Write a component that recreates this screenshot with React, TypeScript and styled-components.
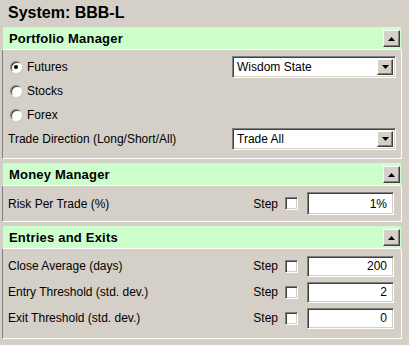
import React from 'react'
import styled, { createGlobalStyle } from 'styled-components'

const GlobalStyle = createGlobalStyle`
  html, body {
    margin: 0;
    padding: 0;
    background: #d4d0c8;
  }
  body {
    font-family: "Liberation Sans", Arial, sans-serif;
    font-size: 12px;
    color: #000;
  }
`

const Page = styled.div`
  width: 409px;
  height: 345px;
  overflow: hidden;
  background: #d4d0c8;
`

const Title = styled.div`
  height: 27px;
  line-height: 26px;
  padding-left: 8px;
  font-size: 16px;
  font-weight: bold;
`

const Panel = styled.section`
  width: 400px;
  margin: 0 0 4px 2px;
`

const Header = styled.div`
  box-sizing: border-box;
  height: 23px;
  margin-left: 1px;
  width: 398px;
  display: flex;
  align-items: center;
  justify-content: space-between;
  background: #ccffcc;
  border-bottom: 1px solid #fff;
  padding: 1px 1px 0 6px;
  font-size: 13px;
  font-weight: bold;
  letter-spacing: 0.2px;
`

const CollapseButton = styled.button`
  box-sizing: border-box;
  width: 17px;
  height: 17px;
  padding: 0;
  background: #d4d0c8;
  border: 1px solid;
  border-color: #fff #404040 #404040 #fff;
  box-shadow: inset -1px -1px 0 #808080;
  display: flex;
  align-items: center;
  justify-content: center;
`

const Body = styled.div<{ $top: number; $bottom: number }>`
  border-left: 1px solid #808080;
  border-right: 1px solid #fff;
  border-bottom: 1px solid #fff;
  padding: ${p => p.$top}px 5px ${p => p.$bottom}px 5px;
`

const Row = styled.div<{ $h: number }>`
  height: ${p => p.$h}px;
  display: flex;
  align-items: center;
  justify-content: space-between;
`

const RadioLabel = styled.label`
  display: flex;
  align-items: center;
  gap: 5px;
  padding-left: 2px;
`

const RadioCircle = styled.span<{ $on?: boolean }>`
  box-sizing: border-box;
  width: 12px;
  height: 12px;
  border-radius: 50%;
  border: 1px solid;
  border-color: #808080 #fff #fff #808080;
  background: #fff;
  box-shadow: inset 1px 1px 0 #404040;
  display: flex;
  align-items: center;
  justify-content: center;
  &::after {
    content: '';
    width: 4px;
    height: 4px;
    border-radius: 50%;
    background: ${p => (p.$on ? '#000' : 'transparent')};
  }
`

const Select = styled.div`
  box-sizing: border-box;
  width: 164px;
  height: 22px;
  display: flex;
  align-items: center;
  justify-content: space-between;
  background: #fff;
  border: 1px solid;
  border-color: #808080 #fff #fff #808080;
  box-shadow: inset 1px 1px 0 #404040, inset -1px -1px 0 #d4d0c8;
  padding: 2px 2px 2px 4px;
  font-size: 12px;
`

const DropButton = styled.span`
  box-sizing: border-box;
  width: 16px;
  height: 16px;
  background: #d4d0c8;
  border: 1px solid;
  border-color: #fff #404040 #404040 #fff;
  box-shadow: inset -1px -1px 0 #808080;
  display: flex;
  align-items: center;
  justify-content: center;
`

const StepGroup = styled.div`
  display: flex;
  align-items: center;
`

const StepText = styled.span`
  margin-right: 7px;
`

const CheckBox = styled.span`
  box-sizing: border-box;
  width: 13px;
  height: 13px;
  background: #fff;
  border: 1px solid;
  border-color: #808080 #fff #fff #808080;
  box-shadow: inset 1px 1px 0 #404040, inset -1px -1px 0 #d4d0c8;
  margin-right: 9px;
`

const ValueInput = styled.input<{ $h: number }>`
  box-sizing: border-box;
  width: 87px;
  height: ${p => p.$h}px;
  margin: 0 2px 0 0;
  background: #fff;
  border: 1px solid;
  border-color: #808080 #fff #fff #808080;
  box-shadow: inset 1px 1px 0 #404040, inset -1px -1px 0 #d4d0c8;
  padding: 0 6px 0 2px;
  text-align: right;
  font-family: "Liberation Sans", Arial, sans-serif;
  font-size: 12px;
  color: #000;
  outline: none;
`

const UpArrow = () => (
  <svg width="7" height="4" viewBox="0 0 7 4">
    <path d="M3.5 0 L7 4 L0 4 Z" fill="#000" />
  </svg>
)

const DownArrow = () => (
  <svg width="7" height="4" viewBox="0 0 7 4">
    <path d="M0 0 L7 0 L3.5 4 Z" fill="#000" />
  </svg>
)

const PanelHeader = ({ title }: { title: string }) => (
  <Header>
    <span>{title}</span>
    <CollapseButton aria-label="Collapse">
      <UpArrow />
    </CollapseButton>
  </Header>
)

const Dropdown = ({ value }: { value: string }) => (
  <Select>
    <span>{value}</span>
    <DropButton>
      <DownArrow />
    </DropButton>
  </Select>
)

const StepField = ({ value, h }: { value: string; h: number }) => (
  <StepGroup>
    <StepText>Step</StepText>
    <CheckBox />
    <ValueInput $h={h} value={value} readOnly />
  </StepGroup>
)

const entries = [
  { label: 'Close Average (days)', value: '200' },
  { label: 'Entry Threshold (std. dev.)', value: '2' },
  { label: 'Exit Threshold (std. dev.)', value: '0' },
]

export default function App() {
  return (
    <Page>
      <GlobalStyle />
      <Title>System: BBB-L</Title>

      <Panel>
        <PanelHeader title="Portfolio Manager" />
        <Body $top={5} $bottom={7}>
          <Row $h={24}>
            <RadioLabel>
              <RadioCircle $on />
              Futures
            </RadioLabel>
            <Dropdown value="Wisdom State" />
          </Row>
          <Row $h={24}>
            <RadioLabel>
              <RadioCircle />
              Stocks
            </RadioLabel>
          </Row>
          <Row $h={24}>
            <RadioLabel>
              <RadioCircle />
              Forex
            </RadioLabel>
          </Row>
          <Row $h={24}>
            <span>Trade Direction (Long/Short/All)</span>
            <Dropdown value="Trade All" />
          </Row>
        </Body>
      </Panel>

      <Panel>
        <PanelHeader title="Money Manager" />
        <Body $top={4} $bottom={4}>
          <Row $h={27}>
            <span>Risk Per Trade (%)</span>
            <StepField value="1%" h={23} />
          </Row>
        </Body>
      </Panel>

      <Panel>
        <PanelHeader title="Entries and Exits" />
        <Body $top={4} $bottom={7}>
          {entries.map(e => (
            <Row $h={26} key={e.label}>
              <span>{e.label}</span>
              <StepField value={e.value} h={21} />
            </Row>
          ))}
        </Body>
      </Panel>
    </Page>
  )
}
